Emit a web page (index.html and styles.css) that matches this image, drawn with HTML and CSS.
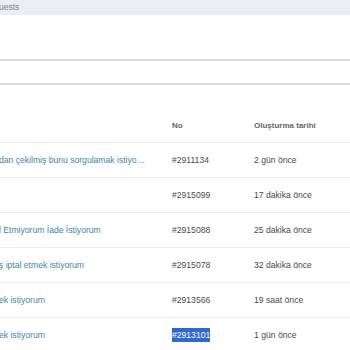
FILE: index.html
```html
<!DOCTYPE html>
<html lang="tr">

<head>
    <meta charset="UTF-8">
    <meta name="viewport" content="width=device-width, initial-scale=1.0">
    <title>Requests</title>
    <link rel="stylesheet" href="styles.css">
</head>

<body>
    <div class="crumbs">uests</div>
    <div class="toolbar"></div>
    <div class="filters"></div>

    <div class="list">
        <div class="row head">
            <span></span>
            <span>No</span>
            <span>Oluşturma tarihi</span>
        </div>
        <div class="row">
            <a href="#">dan çekilmiş bunu sorgulamak istiyo…</a>
            <span>#2911134</span>
            <span>2 gün önce</span>
        </div>
        <div class="row">
            <a href="#"></a>
            <span>#2915099</span>
            <span>17 dakika önce</span>
        </div>
        <div class="row">
            <a href="#">l Etmiyorum İade İstiyorum</a>
            <span>#2915088</span>
            <span>25 dakika önce</span>
        </div>
        <div class="row">
            <a href="#">ş iptal etmek istiyorum</a>
            <span>#2915078</span>
            <span>32 dakika önce</span>
        </div>
        <div class="row">
            <a href="#">ek istiyorum</a>
            <span>#2913566</span>
            <span>19 saat önce</span>
        </div>
        <div class="row">
            <a href="#">ek istiyorum</a>
            <span><span class="selected">#2913101</span></span>
            <span>1 gün önce</span>
        </div>
    </div>
</body>

</html>
```

FILE: styles.css
```css
/* Reset */
* {
    margin: 0;
    padding: 0;
    box-sizing: border-box;
}

body {
    font-family: "Liberation Sans", Arial, sans-serif;
    font-size: 8.6px;
    color: #4a4a4a;
    background-color: #fff;
    overflow: hidden;
}

/* Breadcrumb bar */
.crumbs {
    height: 15px;
    line-height: 15px;
    background-color: #ebeef6;
    color: #80858f;
    font-size: 8.5px;
    margin-left: -1px;
}

.toolbar {
    height: 46px;
    border-bottom: 2px solid #dedede;
}

.filters {
    height: 24px;
    border-bottom: 2px solid #dedede;
}

/* Request list */
.list {
    margin-top: 23px;
}

.row {
    display: grid;
    grid-template-columns: 172px 82px 1fr;
    align-items: center;
    height: 35px;
    border-bottom: 1px solid #ededed;
    white-space: nowrap;
}

.row.head {
    color: #666;
    font-weight: bold;
    font-size: 8px;
}

.row a {
    color: #3d87a3;
    text-decoration: none;
    margin-left: -1px;
    overflow: hidden;
}

.selected {
    background-color: #3167d0;
    color: #fff;
    padding: 2px 0;
}
```
